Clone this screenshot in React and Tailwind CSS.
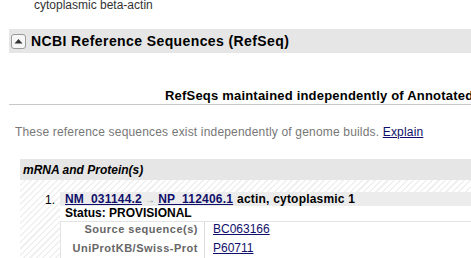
export default function App() {
  const stripes =
    "bg-[repeating-linear-gradient(135deg,#ffffff_0px,#ffffff_3px,#f0f0f0_3px,#f0f0f0_4.5px)]";
  return (
    <div className="w-[471px] h-[258px] overflow-hidden bg-white font-['Liberation_Sans',Arial,sans-serif]">
      <div className="h-[29px] pl-[34px]">
        <div className="text-[12px] leading-[10px] text-[#333]">cytoplasmic beta-actin</div>
      </div>
      <div className="ml-[9px] h-[24px] bg-[#e6e6e6] flex items-center pl-[2px]">
        <div className="w-[15px] h-[15px] rounded-[3px] border border-[#9a9a9a] bg-[#f6f6f6] flex items-center justify-center">
          <svg width="9" height="6" viewBox="0 0 9 6">
            <polygon points="0.5,5.5 4.5,1 8.5,5.5" fill="#333" />
          </svg>
        </div>
        <span className="ml-[5px] text-[14px] font-bold tracking-[0.4px] text-black">
          NCBI Reference Sequences (RefSeq)
        </span>
      </div>
      <div className="mt-[28px] ml-[9px] h-[24px] border-b border-[#c8c8c8] flex items-end whitespace-nowrap">
        <span className="ml-[156px] mb-[1px] text-[13px] font-bold tracking-[0.2px] text-black leading-[14px]">
          RefSeqs maintained independently of Annotated Genomes
        </span>
      </div>
      <div className="mt-[20px] pl-[15px] text-[12px] leading-[14px] tracking-[0.18px] text-[#777] whitespace-nowrap">
        These reference sequences exist independently of genome builds.{" "}
        <span className="text-[#10106b] underline">Explain</span>
      </div>
      <div className="mt-[20px] ml-[20px]">
        <div className="h-[21px] bg-[#e6e6e6] flex items-center pl-[3px]">
          <span className="text-[12px] font-bold italic text-black">mRNA and Protein(s)</span>
        </div>
        <div className={`${stripes} pt-[12px] h-[80px] flex`}>
          <div className="w-[40px] text-right pr-[5px] text-[12px] leading-[14px] text-black pt-[1px]">1.</div>
          <div className="flex-1 flex flex-col">
            <div className="h-[14px] bg-[#ececec] flex items-center pl-[5px] text-[12px] tracking-[0.2px] whitespace-nowrap">
              <span className="text-[#10106b] underline font-bold">NM_031144.2</span>
              <span className="text-[#999] mx-[3px] text-[10px]">→</span>
              <span className="text-[#10106b] underline font-bold">NP_112406.1</span>
              <span className="font-bold text-black ml-[4px]">actin, cytoplasmic 1</span>
            </div>
            <div className="h-[15px] bg-white pl-[5px] text-[12px] leading-[15px] font-bold text-black">
              Status: PROVISIONAL
            </div>
            <div className="flex-1 bg-white border-t border-l border-[#e4e4e4] flex flex-col">
              <div className="flex h-[19px] items-start">
                <div className="w-[140px] text-right pr-[3px] text-[11px] leading-[14px] font-bold text-[#666] tracking-[0.5px]">Source sequence(s)</div>
                <div className="w-px self-stretch bg-[#dcdcdc] ml-[3px]" />
                <div className="pl-[8px] text-[12px] leading-[14px] text-[#10106b] underline">BC063166</div>
              </div>
              <div className="flex h-[19px] items-start">
                <div className="w-[140px] text-right pr-[3px] text-[11px] leading-[14px] font-bold text-[#666] tracking-[0.5px]">UniProtKB/Swiss-Prot</div>
                <div className="w-px self-stretch bg-[#dcdcdc] ml-[3px]" />
                <div className="pl-[8px] text-[12px] leading-[14px] text-[#10106b] underline">P60711</div>
              </div>
            </div>
          </div>
        </div>
      </div>
    </div>
  );
}
